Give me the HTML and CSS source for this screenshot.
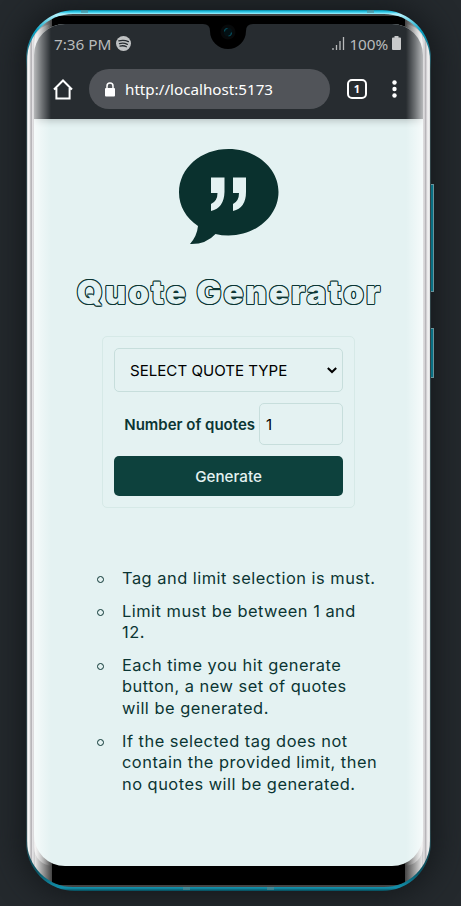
FILE: index.html
```html
<!DOCTYPE html>
<html lang="en">
<head>
<meta charset="utf-8">
<title>Quote Generator</title>
<link rel="stylesheet" href="styles.css">
</head>
<body>
<div class="phone">
  <i class="side volume"></i><i class="side power"></i>
  <div class="shell">
    <div class="bezel">
      <div class="screen">
        <header class="browser">
          <div class="status">
            <span>7:36 PM</span>
            <svg class="spotify" viewBox="0 0 16 16" width="15" height="15"><circle cx="8" cy="8" r="8" fill="#c0c2c3"/><path d="M3 5.2q5.500-1.500 10.200.8M3.700 8.100q4.700-1.200 8.400.8M4.300 10.800q3.800-1 6.800.7" fill="none" stroke="#272c30" stroke-width="1.400" stroke-linecap="round"/></svg>
            <svg class="signal" viewBox="0 0 13 14" width="13" height="14"><path d="M1 11v2M4.500 8v5M8 4v9M11.500 0v13" stroke="#b9bbbc" stroke-width="1.300"/></svg>
            <span class="percent">100%</span>
            <svg class="battery" viewBox="0 0 9 14" width="9" height="14"><path d="M2.500 0h4v1.500H8q1 0 1 1V13q0 1-1 1H1q-1 0-1-1V2.500q0-1 1-1h1.500z" fill="#c9cacb"/></svg>
          </div>
          <div class="toolbar">
            <svg class="home" viewBox="0 0 20 21" width="20" height="21"><path d="M1 10.500 10 1.500l9 9M3.400 9v10.500h13.200V9" fill="none" stroke="#fff" stroke-width="2"/></svg>
            <div class="address">
              <svg viewBox="0 0 10 15" width="10" height="15"><path d="M2 7V4a3 3 0 0 1 6 0v3" fill="none" stroke="#fff" stroke-width="1.500"/><rect y="6" width="10" height="8.500" rx="1" fill="#fff"/></svg>
              <span>http://localhost:5173</span>
            </div>
            <span class="tabs">1</span>
            <svg class="more" viewBox="0 0 5 18" width="5" height="18" fill="#fff"><circle cx="2.500" cy="2.500" r="2.200"/><circle cx="2.500" cy="9" r="2.200"/><circle cx="2.500" cy="15.500" r="2.200"/></svg>
          </div>
        </header>
        <main class="page">
          <svg class="logo" viewBox="0 0 100 96" width="100" height="96"><path d="M49.500 0C77 0 99.500 19 99.500 43S77 86.500 49.500 86.500q-7 0-13-1.500Q27 95.500 11 95q7-8 8-18C7 69 0 57 0 43.500 0 19 22 0 49.500 0z" fill="#0a312e"/><path d="M32 28.500h13.500V43Q45 59 32 62v-7q6.500-3 6.500-11H32zM54 28.500h13V43Q67 59 54 62v-7q6-3 6-11h-6z" fill="#e4f2f2"/></svg>
          <h1>Quote Generator</h1>
          <form class="form">
            <div class="select"><span>SELECT QUOTE TYPE</span><svg viewBox="0 0 10 7" width="10" height="7"><path d="m.8 1 4.200 4 4.200-4" fill="none" stroke="#000" stroke-width="2"/></svg></div>
            <div class="number"><label for="count">Number of quotes</label><input id="count" value="1"></div>
            <button type="button">Generate</button>
          </form>
          <ul class="notes">
            <li>Tag and limit selection is must.</li>
            <li>Limit must be between 1 and 12.</li>
            <li>Each time you hit generate button, a new set of quotes will be generated.</li>
            <li>If the selected tag does not contain the provided limit, then no quotes will be generated.</li>
          </ul>
        </main>
      </div>
    </div>
    <i class="glare left"></i><i class="glare right"></i>
    <svg class="notch" viewBox="0 0 50 27" width="50" height="27"><path d="M0 0h50v1q-7 0-7 7a18 18 0 0 1-36 0q0-7-7-7z"/><circle cx="25" cy="9" r="7.500" fill="#07090a"/><circle cx="25" cy="9" r="4.500" fill="#031014"/><path d="M21.500 8.500q0-3 3-3M28.500 9.500q0 3-3 3.500" fill="none" stroke="#07505f" stroke-width="1.100"/></svg>
  </div>
  <i class="antenna a1"></i><i class="antenna a2"></i><i class="antenna a3"></i><i class="antenna a4"></i>
</div>
</body>
</html>
```

FILE: styles.css
```css
* { box-sizing: border-box; }
body {
  margin: 0;
  height: 906px;
  overflow: hidden;
  background: #24292d;
  font-family: Inter, sans-serif;
}
.phone {
  position: relative;
  width: 405px;
  height: 881px;
  margin: 10px 0 0 26px;
  padding: 4px 1px;
  border-radius: 49px;
  background: linear-gradient(#087f99, #14b2d4 1px, #5fdcf5 3px, #b8f3fc 4px, #08a5c8 20px, #304448 60px, #304448 820px, #075566 862px, #1290ab 878px, #064a58 881px);
  box-shadow: 0 0 30px 5px #15191c;
}
.shell {
  position: relative;
  height: 873px;
  padding: 2px 0;
  border-radius: 46px;
  overflow: hidden;
  background: linear-gradient(90deg, #c9c9cb 0, #f6f6f6 1.500px, #e4e4e4 3px, #aaa7ab 4px, #c6c4c8 5px, #fff 6px, #b8b6ba 7px, #e4e4e4 8px, #aaa 14px, #444 25px, #444 378px, #aaa 389px, #e4e4e4 395px, #b8b6ba 396px, #fff 397px, #aaa7ab 398px, #c6c4c8 399px, #f6f6f6 401px, #d9d9db 403px);
}
.bezel {
  height: 869px;
  padding: 8px 7px 18px;
  background: linear-gradient(90deg, transparent 25px, #000 25px, #000 378px, transparent 378px);
}
.screen {
  height: 842px;
  overflow: hidden;
  border-radius: 31px;
  background: #e4f2f2;
}
.browser {
  height: 95px;
  background: #272c30;
  box-shadow: 0 2px 7px #0003;
  font-family: "Noto Sans", sans-serif;
}
.status {
  display: flex;
  align-items: center;
  height: 40px;
  padding: 0 22px 0 20px;
  color: #b9bbbc;
  font-size: 15.300px;
}
.spotify { margin: -1px 0 0 5px; }
.signal { margin: -1px 4px 0 auto; }
.battery { margin: -3px 0 0 4px; }
.percent { letter-spacing: -.1px; }
.toolbar {
  display: flex;
  align-items: center;
  height: 50px;
  padding: 0 26px 0 19px;
}
.address {
  display: flex;
  align-items: center;
  gap: 10px;
  width: 241px;
  height: 40px;
  margin-left: 16px;
  padding-left: 16px;
  border-radius: 20px;
  background: #515459;
  color: #fff;
  font-size: 15.200px;
}
.tabs {
  width: 20px;
  height: 20px;
  margin-left: 17px;
  border: 2px solid #fff;
  border-radius: 5px;
  color: #fff;
  font: 700 11px/16px "Noto Sans", sans-serif;
  text-align: center;
}
.more { margin-left: auto; }
.page {
  display: flex;
  flex-direction: column;
  align-items: center;
  padding-top: 30px;
}
.logo { display: block; }
h1 {
  margin: 27px 0 0;
  color: #e4f2f2;
  font: 900 33px/41px Inter, sans-serif;
  letter-spacing: 2.050px;
  text-indent: 2px;
  white-space: nowrap;
  -webkit-text-stroke: 2.200px #e4f2f2;
  paint-order: stroke fill;
  text-shadow: 1px 0 #0b3533, -1px 0 #0b3533, 0 1px #0b3533, 0 -1px #0b3533, .7px .7px #0b3533, -.7px .7px #0b3533, .7px -.7px #0b3533, -.7px -.7px #0b3533;
}
.form {
  display: flex;
  flex-direction: column;
  gap: 11px;
  width: 253px;
  height: 172px;
  margin-top: 23px;
  padding: 11px;
  border: 1px solid #d6e9e7;
  border-radius: 5px;
}
.select {
  display: flex;
  align-items: center;
  justify-content: space-between;
  height: 44px;
  padding: 0 5px 0 15px;
  border: 1px solid #c7dedc;
  border-radius: 5px;
  color: #000;
  font-size: 15.100px;
}
.number {
  display: flex;
  align-items: center;
  justify-content: flex-end;
  gap: 4px;
  color: #0b3533;
  font-size: 15px;
  font-weight: 600;
}
input {
  width: 84px;
  height: 42px;
  padding: 0 6px;
  border: 1px solid #c7dedc;
  border-radius: 5px;
  background: transparent;
  font: 15px Inter, sans-serif;
}
button {
  height: 40px;
  padding: 0;
  border: 0;
  border-radius: 5px;
  background: #0d413d;
  color: #e4f2f2;
  font: 500 15.200px Inter, sans-serif;
}
.notes {
  align-self: flex-start;
  width: 256.800px;
  margin: 60px 0 0 88px;
  padding: 0;
  list-style: none;
  color: #0b3533;
  font-size: 16.400px;
  line-height: 21.600px;
  letter-spacing: .5px;
}
.notes li {
  position: relative;
  margin-bottom: 11px;
}
.notes li::before {
  content: "";
  position: absolute;
  box-sizing: border-box;
  top: 8px;
  left: -25px;
  width: 7px;
  height: 7px;
  border: 1px solid #0b3533;
  border-radius: 50%;
}
.glare {
  position: absolute;
  top: 10px;
  bottom: 21px;
  width: 19px;
}
.left {
  left: 7px;
  border-radius: 31px 0 0 31px / 31px 0 0 31px;
  background: linear-gradient(90deg, #fffa, #fff5 8px, #fff0 17px);
}
.right {
  right: 7px;
  border-radius: 0 31px 31px 0 / 0 31px 31px 0;
  background: linear-gradient(270deg, #fffa, #fff5 8px, #fff0 17px);
}
.notch {
  position: absolute;
  top: 9px;
  left: 176px;
}
.side {
  position: absolute;
  right: -3px;
  width: 3px;
  border: 1px solid #69939a;
  border-left: 0;
  background: #087084;
}
.volume { top: 174px; height: 108px; }
.power { top: 318px; height: 50px; }
.antenna {
  position: absolute;
  width: 7px;
  height: 3px;
  background: #5c899199;
}
.a1 { top: 0; left: 55px; }
.a2 { top: 0; right: 57px; }
.a3 { bottom: 1px; left: 157px; }
.a4 { bottom: 1px; right: 157px; }
```
